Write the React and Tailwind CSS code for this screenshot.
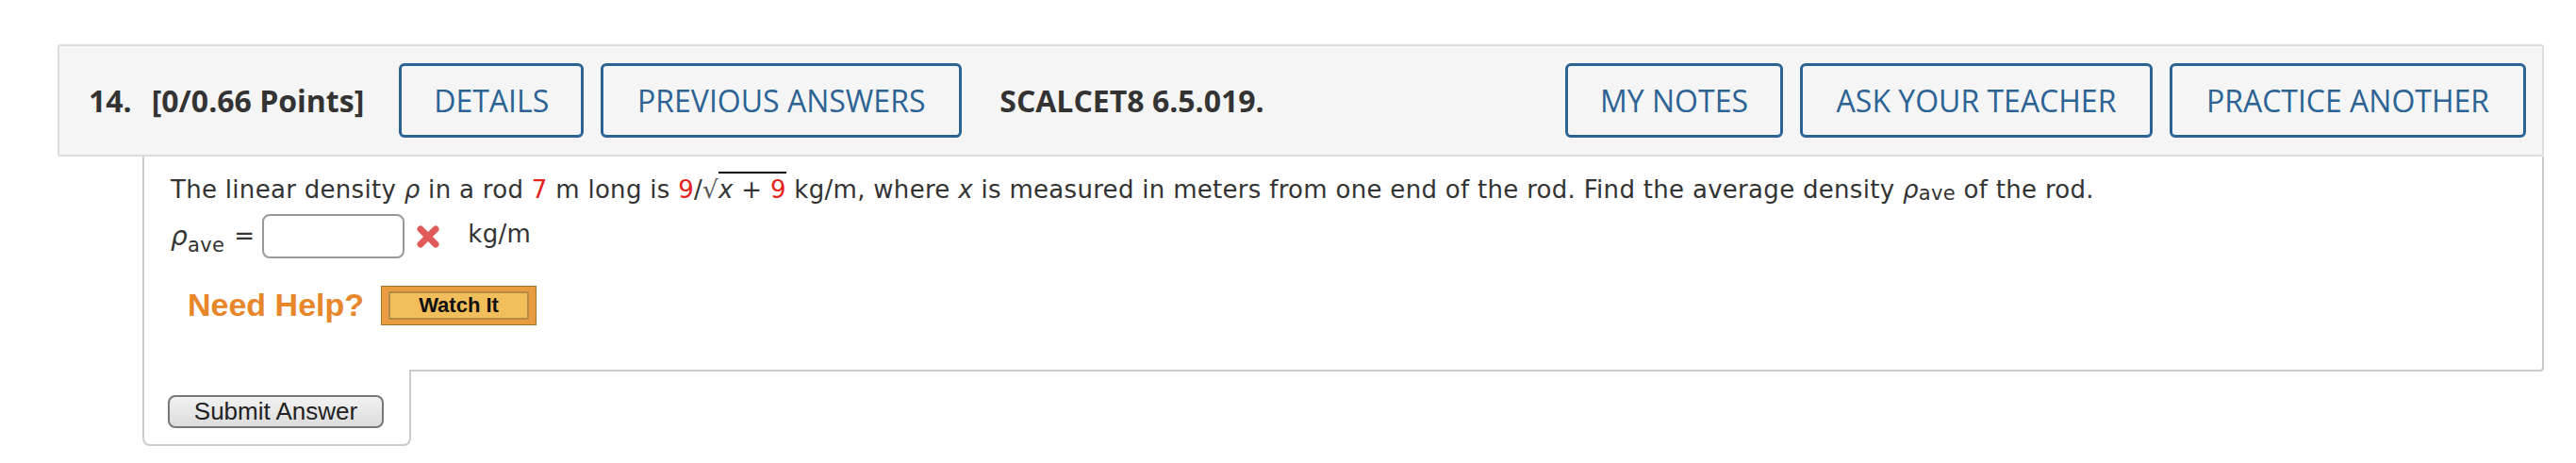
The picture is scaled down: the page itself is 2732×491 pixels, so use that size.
const HEAD_BTN =
  "flex h-[79px] items-center justify-center rounded-[6px] border-[3px] border-[#2c6394] text-[#2c6394] font-normal"

function HeadButton({ w, children }) {
  return <div className={`${HEAD_BTN} ${w}`}>{children}</div>
}

function WrongMark() {
  return (
    <svg width="28" height="28" viewBox="0 0 28 28" className="ml-[11px]">
      <g stroke="#e15a5a" strokeWidth="7" strokeLinecap="round">
        <line x1="6" y1="6" x2="22" y2="22" />
        <line x1="22" y1="6" x2="6" y2="22" />
      </g>
    </svg>
  )
}

function Red({ children }) {
  return <span className="text-[#e3241b]">{children}</span>
}

function Rho() {
  return <i className="italic">ρ</i>
}

function Header() {
  return (
    <div className="flex h-[119px] items-center rounded-[3px] border-2 border-[#dddddd] bg-[#f5f5f5] pl-[31px] pr-[17px] font-['Open_Sans',sans-serif] text-[32px] text-[#333333]">
      <span className="font-bold">14.</span>
      <span className="ml-[21px] font-bold">[0/0.66 Points]</span>
      <div className="ml-[37px] flex gap-[18px]">
        <HeadButton w="w-[196px]">DETAILS</HeadButton>
        <HeadButton w="w-[383px]">PREVIOUS ANSWERS</HeadButton>
      </div>
      <span className="ml-[40px] font-bold">SCALCET8 6.5.019.</span>
      <div className="ml-auto flex gap-[18px]">
        <HeadButton w="w-[231px]">MY NOTES</HeadButton>
        <HeadButton w="w-[374px]">ASK YOUR TEACHER</HeadButton>
        <HeadButton w="w-[378px]">PRACTICE ANOTHER</HeadButton>
      </div>
    </div>
  )
}

function Body() {
  return (
    <div className="ml-[90px] font-['DejaVu_Sans',Verdana,sans-serif] text-[26px] tracking-[0.3px] text-[#333333]">
      <div className="h-[228px] rounded-br-[4px] border-x-2 border-b-2 border-[#cccccc] pl-[28px] pt-[19px]">
        {/* question text */}
        <p className="leading-[32px] whitespace-nowrap">
          The linear density <Rho /> in a rod <Red>7</Red> m long is <Red>9</Red>/
          <span className="text-[#555]">√</span>
          <span className="border-t-2 border-black pt-[2px]">
            <i>x</i> + <Red>9</Red>
          </span>{' '}
          kg/m, where <i>x</i> is measured in meters from one end of the rod. Find the average density{' '}
          <Rho />
          <sub className="relative top-[2px] text-[21px]">ave</sub> of the rod.
        </p>

        {/* answer row */}
        <div className="mt-[10px] flex h-[47px] items-center">
          <span className="text-[28px] italic leading-none">ρ</span>
          <span className="relative top-[10px] text-[21px]">ave</span>
          <span className="ml-[10px]">=</span>
          <div className="ml-[8px] h-[47px] w-[151px] rounded-[8px] border-2 border-[#999999] bg-white" />
          <WrongMark />
          <span className="ml-[28px] relative top-[-2px]">kg/m</span>
        </div>

        {/* help row */}
        <div className="mt-[24px] flex items-center pl-[18px]">
          <span className="font-['Liberation_Sans',Arial,sans-serif] text-[34px] font-bold tracking-normal text-[#e8862a]">
            Need Help?
          </span>
          <div className="ml-[18px] flex h-[42px] w-[165px] border border-[#a8702e] bg-[#e99b3f] px-[7px] py-[5px]">
            <div className="flex flex-1 items-center justify-center border-2 border-[#b48a44] bg-[#f2bd5b] font-['Liberation_Sans',Arial,sans-serif] text-[22px] font-bold tracking-normal text-[#111111]">
              Watch It
            </div>
          </div>
        </div>
      </div>

      {/* submit tab */}
      <div className="-mt-[2px] h-[81px] w-[285px] rounded-b-[8px] border-x-2 border-b-2 border-[#cccccc] bg-white pl-[25px] pt-[27px]">
        <button className="flex h-[35px] w-[229px] items-center justify-center rounded-[8px] border-2 border-[#777777] bg-gradient-to-b from-[#f2f2f2] to-[#dcdcdc] font-['Liberation_Sans',Arial,sans-serif] text-[26px] tracking-normal text-[#222222]">
          Submit Answer
        </button>
      </div>
    </div>
  )
}

export default function App() {
  return (
    <div className="min-h-[491px] bg-white pl-[61px] pt-[47px]">
      <div className="w-[2637px]">
        <Header />
        <Body />
      </div>
    </div>
  )
}
